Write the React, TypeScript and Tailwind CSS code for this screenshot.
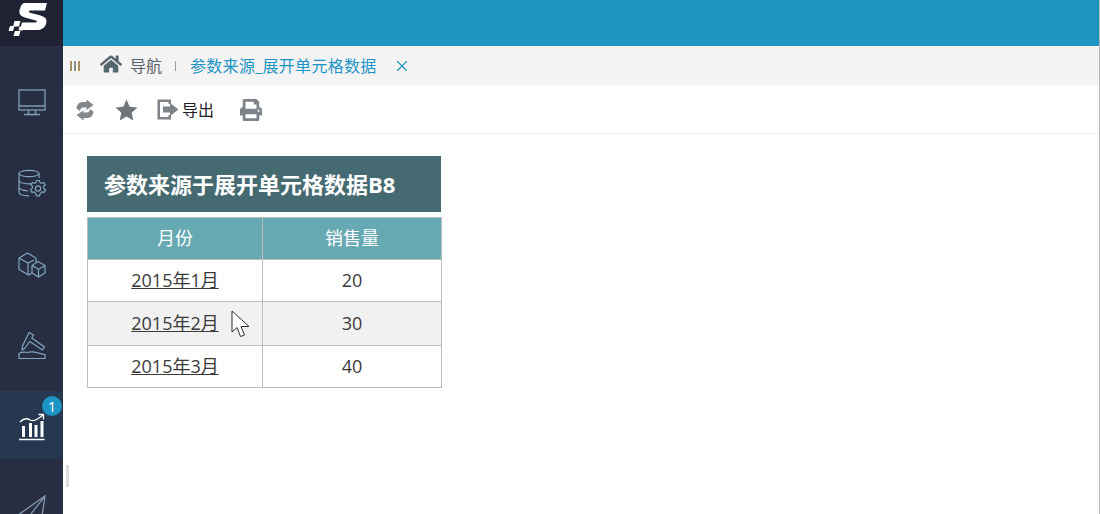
import React from 'react';
import { X } from 'lucide-react';
import { FaHome, FaPrint } from 'react-icons/fa';

const FONT = "font-['Open_Sans','Noto_Sans_CJK_SC',sans-serif]";

const rows = [
  { month: '2015年1月', value: 20, shaded: false, h: 'h-[42px]' },
  { month: '2015年2月', value: 30, shaded: true, h: 'h-[44px]' },
  { month: '2015年3月', value: 40, shaded: false, h: 'h-[41px]' },
];

function Logo() {
  return (
    <svg width="63" height="46" viewBox="0 0 63 46" fill="#fff">
      <path d="M25 3 H47 L45 10.5 H30 C28.5 10.5 28.5 12.3 30 12.7 L40.5 15.5 C46 17 47.5 20 46 24 C44.5 28 41 30 37 30 H20 L22 22.5 H35.5 C37.2 22.5 37.4 20.8 35.8 20.4 L25 17.5 C19.5 16 18.5 12.5 20 8.5 C21 5 22.5 3 25 3Z" />
      <path d="M14.5 21 H20.5 L19 26.5 H13Z" />
      <path d="M10 26 H14.5 L13 31 H8.5Z" />
      <path d="M15 31 H20.5 L19 36 H13.5Z" />
      <path d="M19.5 26.5 H24 L22.8 30.5 H18.5Z" />
    </svg>
  );
}

function MonitorIcon() {
  return (
    <svg width="30" height="30" viewBox="0 0 30 30" fill="none" stroke="#7f9db5" strokeWidth="1.3">
      <rect x="2" y="2" width="26" height="20" />
      <path d="M2 18 H28 M11.5 22 V26 M18.5 22 V26 M7 26.5 H23" />
    </svg>
  );
}

function DatabaseGearIcon() {
  return (
    <svg width="30" height="30" viewBox="0 0 30 30" fill="none" stroke="#7fa5c0" strokeWidth="1.2">
      <ellipse cx="12" cy="4.5" rx="10" ry="3.2" />
      <path d="M2 4.5 V23 C2 25.5 6 26.8 12 26.8 M22 4.5 V9 M2 11 C2 13.5 6 14.8 12 14.8 C13 14.8 14 14.7 15 14.6 M2 18 C2 20.5 6 21.6 11 21.8" />
      <circle cx="21" cy="19.5" r="2.6" />
      <path d="M19.6 11.5 H22.4 L22.9 13.6 L24.6 14.4 L26.6 13.4 L28.2 15.6 L26.6 17.1 L26.8 19.5 L28.6 21 L27.2 23.4 L25 22.8 L23.2 24.6 L22.6 26.8 H19.4 L18.8 24.6 L17 22.8 L14.8 23.4 L13.4 21 L15.2 19.5 L15.4 17.1 L13.8 15.6 L15.4 13.4 L17.4 14.4 L19.1 13.6Z" />
    </svg>
  );
}

function CubesIcon() {
  return (
    <svg width="30" height="30" viewBox="0 0 30 30" fill="none" stroke="#7fa5c0" strokeWidth="1.2">
      <path d="M10.5 3 L19 8 V12 M10.5 3 L2 8 V19.5 L11.5 25 L15 23 M2 8 L11 13 L17 10 M11 13 V25" />
      <path d="M21 11.5 L28 15.5 V23 L21.5 27 L15 23 V15.5Z M15 15.5 L21.5 19.3 L28 15.5 M21.5 19.3 V27" />
    </svg>
  );
}

function HammerIcon() {
  return (
    <svg width="30" height="30" viewBox="0 0 30 30" fill="none" stroke="#7fa5c0" strokeWidth="1.2">
      <path d="M12 1.5 L16.5 4 L14.8 7 L27.5 16 L25.5 19 L12.8 10.5 L7.5 17.5 L5 19 L5.5 15 Z" />
      <path d="M2 27.5 V22.5 C6 20 9 22 13 21 C17 20 23 23 28 23.5 V27.5 Z" />
    </svg>
  );
}

function ChartIcon() {
  return (
    <svg width="28" height="28" viewBox="0 0 28 28" fill="none" stroke="#fff" strokeWidth="1.3">
      <path d="M1 26.5 H26.5" strokeWidth="1.5" />
      <rect x="4" y="13" width="3" height="11" fill="#fff" stroke="none" />
      <rect x="11" y="10" width="3" height="14" fill="#fff" stroke="none" />
      <rect x="16.5" y="12" width="3" height="12" fill="#fff" stroke="none" />
      <rect x="22.5" y="8" width="3" height="16" fill="#fff" stroke="none" />
      <path d="M2 9 C6 5 9 5 12 7 C16 9 20 6 25 2 M20.5 1.5 H25.5 V6.5" />
    </svg>
  );
}

function PlaneIcon() {
  return (
    <svg width="30" height="30" viewBox="0 0 30 30" fill="none" stroke="#8298ad" strokeWidth="1.3">
      <path d="M28 1 L1 20 L10 24 L28 1 L24 28 L14 24" />
    </svg>
  );
}

function RefreshIcon() {
  return (
    <svg width="18" height="22" viewBox="0 0 18 22" fill="#83888d">
      <path d="M0.5 9.5 C1 5 3.5 3 7 3 H10.5 V0.5 L17.5 6 L10.5 11 V8.5 H7.5 C5 8.5 4.5 10 4 12 Z" />
      <path d="M17.5 12.5 C17 17 14.5 19 11 19 H7.5 V21.5 L0.5 16 L7.5 11.5 V13.5 H10.5 C13 13.5 13.5 12 14 10 Z" />
    </svg>
  );
}

function StarIcon() {
  return (
    <svg width="23" height="22" viewBox="0 0 23 22" fill="#6f7479">
      <path d="M11.5 0.5 L14.7 7.7 L22.5 8.5 L16.7 13.8 L18.3 21.5 L11.5 17.5 L4.7 21.5 L6.3 13.8 L0.5 8.5 L8.3 7.7Z" />
    </svg>
  );
}

function ExportIcon() {
  return (
    <svg width="22" height="21" viewBox="0 0 22 21" fill="#7d8388">
      <path d="M0.5 0.5 H14 V5 H11.5 V3 H3 V18 H11.5 V16 H14 V20.5 H0.5Z" />
      <path d="M6 7.5 H13 V4 L21.5 10.5 L13 17 V13.5 H6Z" />
    </svg>
  );
}

function CursorIcon() {
  return (
    <svg width="20" height="28" viewBox="0 0 20 28" fill="#fff" stroke="#2b2f38" strokeWidth="1">
      <path d="M1 1 V22 L6 17.5 L9.5 26.5 L13.5 25 L10 16.5 L18 16.5Z" />
    </svg>
  );
}

const navItems = [<MonitorIcon />, <DatabaseGearIcon />, <CubesIcon />, <HammerIcon />];

export default function App() {
  return (
    <div className={`${FONT} flex h-[514px] w-[1100px] overflow-hidden bg-white`}>
      {/* Sidebar */}
      <aside className="flex w-[63px] shrink-0 flex-col overflow-hidden bg-[#282e42]">
        <div className="h-[46px] shrink-0 bg-[#1e2233]">
          <Logo />
        </div>
        <div className="flex flex-col pt-[16px]">
          {navItems.map((icon, i) => (
            <div key={i} className="flex h-[81px] shrink-0 items-center justify-center">
              {icon}
            </div>
          ))}
          <div className="relative mt-[5px] flex h-[68px] shrink-0 items-center justify-center bg-[#263750] pt-[3px]">
            <ChartIcon />
            <span className="absolute left-[42px] top-[5px] flex h-[20px] w-[20px] items-center justify-center rounded-full bg-[#1c94c4] text-[15px] leading-none text-white">
              1
            </span>
          </div>
          <div className="flex shrink-0 justify-center pt-[36px]">
            <PlaneIcon />
          </div>
        </div>
      </aside>

      <main className="relative flex min-w-0 flex-1 flex-col border-r border-[#b8b8b8]">
        {/* Top bar */}
        <div className="h-[46px] shrink-0 bg-[#1e94c3]" />

        {/* Tabs */}
        <div className="flex h-[40px] shrink-0 items-center bg-[#f4f4f4] pl-[7px]">
          <div className="flex h-[10px] w-[10px] justify-between">
            <span className="w-[2px] bg-[#a8925f]" />
            <span className="w-[2px] bg-[#8b8f8c]" />
            <span className="w-[2px] bg-[#a8925f]" />
          </div>
          <FaHome className="ml-[20px] mt-[-4px] text-[#56666f]" size={22} />
          <span className="ml-[8px] text-[16px] text-[#5b6166]">导航</span>
          <span className="ml-[13px] h-[10px] w-[1px] bg-[#9a9ea2]" />
          <span className="ml-[14px] text-[16px] tracking-[0.3px] text-[#1c94c4]">参数来源_展开单元格数据</span>
          <X className="ml-[16px] text-[#1c94c4]" size={18} strokeWidth={1.5} />
        </div>

        {/* Toolbar */}
        <div className="flex h-[48px] shrink-0 items-center border-b border-[#ececec] bg-white pl-[13px]">
          <RefreshIcon />
          <div className="ml-[21px]">
            <StarIcon />
          </div>
          <div className="ml-[19px]">
            <ExportIcon />
          </div>
          <span className="ml-[3px] text-[16px] text-[#1d2026]">导出</span>
          <FaPrint className="ml-[26px] text-[#7d8388]" size={22} />
        </div>

        {/* Report */}
        <div className="relative flex-1 pl-[24px] pt-[22px]">
          <div className="flex h-[56px] w-[354px] items-center bg-[#466a72] pl-[17px] text-[22px] font-bold text-white">
            参数来源于展开单元格数据B8
          </div>
          <div className="mt-[5px] w-[355px] border border-[#bdbdbd] text-[18px]">
            <div className="flex h-[42px] border-b border-[#bdbdbd] bg-[#66a9b3] text-white">
              <div className="flex w-[175px] items-center justify-center border-r border-[#bdbdbd]">月份</div>
              <div className="flex flex-1 items-center justify-center">销售量</div>
            </div>
            {rows.map((row, i) => (
              <div
                key={row.month}
                className={`flex ${row.h} ${i < rows.length - 1 ? 'border-b border-[#bdbdbd]' : ''} ${row.shaded ? 'bg-[#f1f1f1]' : 'bg-white'} text-[#3a3a3a]`}
              >
                <div className="flex w-[175px] items-center justify-center border-r border-[#bdbdbd] underline">
                  {row.month}
                </div>
                <div className="flex flex-1 items-center justify-center">{row.value}</div>
              </div>
            ))}
          </div>
          <div className="absolute left-[168px] top-[176px]">
            <CursorIcon />
          </div>
        </div>

        {/* Sash grip */}
        <div className="absolute left-[3px] top-[465px] h-[22px] w-[3px] bg-[#dcdfe0]" />
      </main>
    </div>
  );
}
